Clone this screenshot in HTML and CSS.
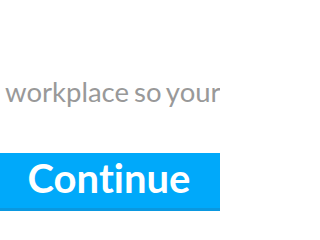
FILE: index.html
```html
<!DOCTYPE html>
<html>
<head>
<meta charset="utf-8">
<link rel="stylesheet" href="styles.css">
</head>
<body>
<div class="page">
  <p class="lead">workplace so your</p>
  <button class="cta">Continue</button>
</div>
</body>
</html>
```
FILE: styles.css
```css
html, body {
  margin: 0;
  padding: 0;
  background: #ffffff;
  overflow: hidden;
  width: 220px;
  height: 220px;
}
.page {
  width: 220px;
  height: 220px;
  overflow: hidden;
  display: flex;
  flex-direction: column;
  font-family: Lato, "Noto Sans", sans-serif;
  font-variant-ligatures: none;
}
.lead {
  margin: 74px 0 0 5px;
  font-size: 27.5px;
  line-height: 36px;
  color: #999999;
  white-space: nowrap;
  word-spacing: -2px;
}
.cta {
  margin-top: 43px;
  width: 220px;
  height: 58px;
  flex: none;
  border: 0;
  border-bottom: 3px solid #0a98e0;
  background: #00a9fa;
  color: #ffffff;
  font-family: Lato, "Noto Sans", sans-serif;
  font-variant-ligatures: none;
  font-weight: 700;
  font-size: 40px;
  line-height: 51px;
  padding: 0 2px 4px 0;
  text-align: center;
}
```
